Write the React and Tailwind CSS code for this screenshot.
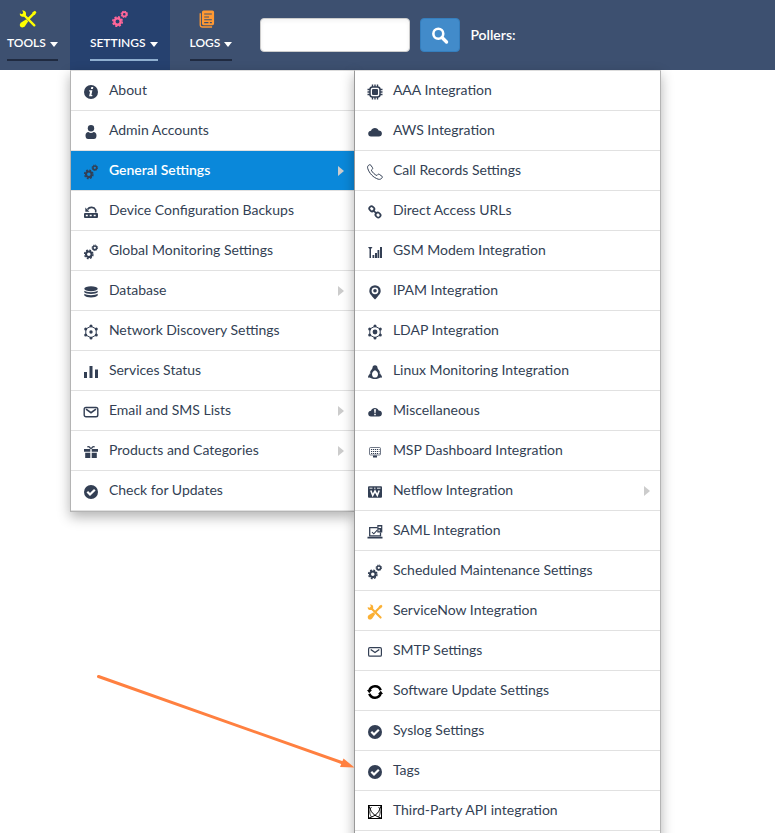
import clsx from 'clsx';

/** Base wrapper for the 16-grid menu icons */
function Icon({ className = 'size-4', children, ...rest }) {
  return (
    <svg viewBox="0 0 16 16" fill="currentColor" className={clsx('shrink-0', className)} aria-hidden="true" {...rest}>
      {children}
    </svg>
  );
}

function GearsIcon({ className }) {
  return (
    <Icon className={className}>
      <g fill="none" stroke="currentColor">
        <circle cx="5.8" cy="10.3" r="2.8" strokeWidth="2.1" />
        <circle cx="5.8" cy="10.3" r="4.2" strokeWidth="1.4" strokeDasharray="1.85 1.448" />
        <circle cx="11.8" cy="3.8" r="1.9" strokeWidth="1.5" />
        <circle cx="11.8" cy="3.8" r="2.8" strokeWidth="0.9" strokeDasharray="1.3 0.9" />
      </g>
    </Icon>
  );
}

function ToolsIcon({ className }) {
  return (
    <Icon className={className}>
      <path d="M4.2 4.2 13.6 13.6" stroke="currentColor" strokeWidth="2.100" strokeLinecap="round" />
      <path d="M.8 2.900 2.300 3.700 3.700 2.900 3.600 1.500 2.700.6C4.500.2 6 1.200 6.200 2.700L6.200 4.600 4.800 6.100 2.900 6.100C1.300 5.700.4 4.400.8 2.900Z" />
      <path d="M14.200.7 15.500 2 14.200 4.300 13.200 4.600 8.700 9.100 7.200 7.600 11.700 3.100 12 2.100Z" />
      <path d="M6.500 8.200 8.200 9.900 5.400 14.200C4.300 15.700 2.500 15.800 1.300 14.900.3 13.700.6 12 1.900 11.100Z" />
    </Icon>
  );
}

function LogsIcon({ className }) {
  return (
    <Icon className={className}>
      <path
        fillRule="evenodd"
        d="M5 .5h7.800a1.500 1.500 0 0 1 1.500 1.500v10a1.500 1.500 0 0 1-1.500 1.500H5A1.500 1.500 0 0 1 3.500 12V2A1.500 1.500 0 0 1 5 .5ZM5.500 3v1h6.800V3H5.500Zm0 2.700v1h4.300v-1H5.500Zm0 2.500v1h6.800v-1H5.500Zm0 2.500v1h3.800v-1H5.500Zm5 0v1h1.800v-1h-1.800Z"
      />
      <path d="M2 2.800v10.300a2 2 0 0 0 2 2h8.500" fill="none" stroke="currentColor" strokeWidth="1.200" />
    </Icon>
  );
}

function InfoIcon() {
  return (
    <Icon>
      <circle cx="8" cy="8" r="7" />
      <path d="M8.300 3h2l-.4 2h-2ZM6.200 6.200h3.200l-1 4.800h1l-.2 1.200H6.100l1-4.800H6Z" fill="#fff" />
    </Icon>
  );
}

function UserIcon() {
  return (
    <Icon>
      <circle cx="8" cy="4.200" r="3.200" />
      <path d="M2.500 11.400c0-2 1.300-3.300 2.900-3.400a4 4 0 0 0 5.200 0c1.600.1 2.900 1.400 2.900 3.400 0 2.200-1 3.600-2.600 3.600H5.100c-1.600 0-2.600-1.400-2.600-3.600Z" />
    </Icon>
  );
}

function BackupIcon() {
  return (
    <Icon>
      <path fillRule="evenodd" d="M2 9h12a1 1 0 0 1 1 1v3a1 1 0 0 1-1 1H2a1 1 0 0 1-1-1v-3a1 1 0 0 1 1-1Zm.8 1.700v1.600h2V10.700h-2Zm3.900 0v1.600h2V10.700h-2Zm4 0v1.600h2V10.700h-2Z" />
      <path d="M4.500 5.500C6.500 2.500 11 2.700 12.700 6v2.500" fill="none" stroke="currentColor" strokeWidth="1.600" />
      <path d="M2.300 7.700V3.600l4.200 4.100Z" />
    </Icon>
  );
}

function DatabaseIcon() {
  return (
    <Icon>
      <ellipse cx="8" cy="4.700" rx="6.700" ry="2.500" />
      <path d="M1.300 6.700c2 1.900 11.400 1.900 13.400 0v1.500c-2 2.300-11.400 2.300-13.400 0ZM1.300 9.700c2 1.900 11.400 1.900 13.400 0v1.800c-2 2.500-11.400 2.500-13.400 0Z" />
    </Icon>
  );
}

function NetworkIcon({ core = 1.700 }) {
  return (
    <Icon>
      <path d="M8 2.200 13.200 5v6L8 13.800 2.800 11V5Z" fill="none" stroke="currentColor" strokeWidth="1" />
      <circle cx="8" cy="8" r={core} />
      {[[8, 2], [13.300, 5], [13.300, 11], [8, 14], [2.700, 11], [2.700, 5]].map(([x, y]) => (
        <circle key={`${x}-${y}`} cx={x} cy={y} r="1.500" />
      ))}
    </Icon>
  );
}

const LdapIcon = () => <NetworkIcon core={2.400} />;

function BarsIcon() {
  return (
    <Icon>
      <path d="M1 8h3v6H1ZM6.500 2h3v12h-3ZM12 5.500h3V14h-3Z" />
    </Icon>
  );
}

function MailIcon() {
  return (
    <Icon fill="none" stroke="currentColor">
      <rect x="1.200" y="3.500" width="13.600" height="9.300" rx="1.800" strokeWidth="1.400" />
      <path d="M3 5.200 8 8.700l5-3.500" strokeWidth="1.600" />
    </Icon>
  );
}

function GiftIcon() {
  return (
    <Icon>
      <path d="M1 5h6.300v2.800H1ZM8.700 5H15v2.800H8.700ZM2.200 8.800h5.100V14H2.200ZM8.700 8.800h5.100V14H8.700Z" />
      <path d="M4.300 3c1.300-.7 2.500-.1 3.300 1.700M11.700 3c-1.300-.7-2.500-.1-3.300 1.700" fill="none" stroke="currentColor" strokeWidth="1.300" />
    </Icon>
  );
}

function CheckIcon() {
  return (
    <Icon>
      <circle cx="8" cy="8" r="7" />
      <path d="m4.300 7.800 2.700 2.700 4.800-4.800" fill="none" stroke="#fff" strokeWidth="2.200" />
    </Icon>
  );
}

function ChipIcon() {
  return (
    <Icon>
      <path d="M5.500 .5v15M8 .5v15M10.500 .5v15M.5 5.500h15M.5 8h15M.5 10.500h15" stroke="currentColor" strokeWidth="1.400" />
      <rect x="3" y="3" width="10" height="10" rx="2.500" fill="#fff" stroke="currentColor" strokeWidth="1.500" />
      <rect x="5" y="5" width="6" height="6" rx="1" />
    </Icon>
  );
}

function CloudIcon({ children }) {
  return (
    <Icon>
      <path d="M4 12.500a3 3 0 0 1-2.800-3c0-1.700 1.300-2.700 2.800-2.800C4.600 4.800 6.200 4 7.900 4c1.900 0 3.200 1 3.700 2.600 2 0 3.300 1.200 3.300 3s-1.200 2.900-3 2.900Z" />
      {children}
    </Icon>
  );
}

function CloudAlertIcon() {
  return (
    <CloudIcon>
      <path d="M7 5.300h2L8.500 9h-1ZM7.200 9.800h1.600v1.500H7.200Z" fill="#fff" />
    </CloudIcon>
  );
}

function PhoneIcon() {
  return (
    <Icon fill="none" stroke="currentColor">
      <path d="M2.300.8C.9 1.500.2 2.800.7 4.300c1.500 5 5.500 9.200 10.500 10.900 1.700.5 3.200-.2 4-1.600.3-.6.200-1-.3-1.400l-2.500-1.800c-.6-.4-1.100-.4-1.600.1l-.9 1C7.700 10.700 5.500 8.500 4.300 6.200l1-.9c.5-.5.5-1 .2-1.600L3.800 1.200C3.400.7 2.900.5 2.300.8Z" />
    </Icon>
  );
}

function LinkIcon() {
  return (
    <Icon fill="none" stroke="currentColor">
      <rect x="2.200" y="2.600" width="5.200" height="4.400" rx="2" strokeWidth="1.700" transform="rotate(45 4.800 4.800)" />
      <rect x="8.400" y="8.800" width="5.200" height="4.400" rx="2" strokeWidth="1.700" transform="rotate(45 11 11)" />
      <path d="m5.800 5.800 4.200 4.200" strokeWidth="1.700" />
    </Icon>
  );
}

function SignalIcon() {
  return (
    <Icon>
      <path d="M1 3h4.500L4 5V14H2.500V5ZM5.500 11h1.800v3H5.500ZM8 9h2v5H8ZM10.500 6h1.800v8h-1.800ZM13 3h2v11h-2Z" />
    </Icon>
  );
}

function PinIcon() {
  return (
    <Icon>
      <path fillRule="evenodd" d="M8 1.200a5.700 5.700 0 0 1 5.700 5.700c0 3-2.700 4.700-4.200 7.200L8 15.500l-1.500-1.400C5 11.600 2.300 9.900 2.300 6.900A5.700 5.700 0 0 1 8 1.200ZM8 3.400a3.400 3.400 0 1 0 0 6.800 3.400 3.400 0 0 0 0-6.800Z" />
      <circle cx="8" cy="6.800" r="1.800" />
    </Icon>
  );
}

function PenguinIcon() {
  return (
    <Icon>
      <path d="M8 1.200c1.700 0 2.500 1.100 2.500 2.600 0 1.200 2 2.200 2.700 5.200l1.700 3.400c.3.900-.5 1.400-1.300 1.200l-2.500.8c-1.800.8-4.400.8-6.200 0l-2.500-.8c-.8.2-1.600-.3-1.300-1.200L2.800 9c.7-3 2.700-4 2.700-5.200 0-1.500.8-2.600 2.500-2.600Z" />
      <path d="M8 6.200c2 .7 3 2.300 3 4 0 2-1.200 3.400-3 3.400s-3-1.400-3-3.400c0-1.700 1-3.300 3-4Z" fill="#fff" />
      <path d="M1.500 10.500 3.600 9M14.500 10.500 12.400 9" stroke="#fff" strokeWidth=".8" />
    </Icon>
  );
}

function MonitorIcon() {
  return (
    <Icon>
      <rect x="2.500" y="3.500" width="11" height="7.500" rx="1" fill="none" stroke="currentColor" strokeWidth=".7" />
      <path d="M4 5.500h8.500M4 7.500h8.500M4 9.500h8.500" stroke="currentColor" strokeWidth="1.200" strokeDasharray="1.200 .8" />
      <path d="M6 11.500h4v2H6Z" />
    </Icon>
  );
}

function NetflowIcon() {
  return (
    <Icon>
      <rect x="1" y="2.300" width="14" height="11.500" rx="1" />
      <path d="M2.500 4.200h3M7 4.200h1.500M10 4.200h3.500" stroke="#fff" strokeWidth=".9" />
      <path d="m3.800 6.500 1.900 4.800L8 7l2.300 4.300 1.900-4.800" fill="none" stroke="#fff" strokeWidth="1.600" />
    </Icon>
  );
}

function LaptopIcon() {
  return (
    <Icon>
      <path d="M10.500 3.600H2.700v8.200h10.800V8.500" fill="none" stroke="currentColor" strokeWidth="1.300" />
      <path d="M.5 12.800h15v1.700H.5ZM10.300 1h5v7.500h-5Z" />
      <path d="M11.500 2.500h2.600v1.500h-2.600ZM11.500 5.600h1.200v1.600h-1.200Z" fill="#fff" />
      <path d="m5 8.200 1.800 1.600 3.400-3.600" fill="none" stroke="currentColor" strokeWidth="1.100" />
    </Icon>
  );
}

function SmallMailIcon() {
  return (
    <Icon fill="none" stroke="currentColor">
      <rect x="1.600" y="3.700" width="12.800" height="8.500" rx="1.300" strokeWidth="1.200" />
      <path d="m3.700 5.500 4.300 3 4.300-3" strokeWidth="1.400" />
    </Icon>
  );
}

function RefreshIcon() {
  return (
    <Icon className="size-4 text-black">
      <path d="M2.300 6.600A6 6 0 0 1 13.700 6.200M13.700 9.400A6 6 0 0 1 2.300 9.800" fill="none" stroke="currentColor" strokeWidth="2.500" />
      <path d="M0 6h5L2.200 9.300ZM16 10h-5l2.800-3.300Z" />
    </Icon>
  );
}

function ApiIcon() {
  return (
    <Icon className="size-4 text-black" fill="none" stroke="currentColor">
      <rect x="1.500" y="1.500" width="13" height="13" strokeWidth="1" />
      <path d="M2 2c1.300 4.500 3.300 7.500 6 9.300 2 1.300 4 2 6 2.700M14 2c-1.300 4.500-3.300 7.500-6 9.300-2 1.300-4 2-6 2.700" strokeWidth="1" />
      <path d="M4.500 3C2.200 5.500 2.200 10 4.500 13M11.500 3c2.300 2.500 2.300 7 0 10" strokeWidth=".8" />
    </Icon>
  );
}

const ServiceNowIcon = () => <ToolsIcon className="size-4 text-[#fbb034]" />;

const settingsMenu = [
  { label: 'About', icon: InfoIcon },
  { label: 'Admin Accounts', icon: UserIcon },
  { label: 'General Settings', icon: GearsIcon, hasChildren: true, active: true },
  { label: 'Device Configuration Backups', icon: BackupIcon },
  { label: 'Global Monitoring Settings', icon: GearsIcon },
  { label: 'Database', icon: DatabaseIcon, hasChildren: true },
  { label: 'Network Discovery Settings', icon: NetworkIcon },
  { label: 'Services Status', icon: BarsIcon },
  { label: 'Email and SMS Lists', icon: MailIcon, hasChildren: true },
  { label: 'Products and Categories', icon: GiftIcon, hasChildren: true },
  { label: 'Check for Updates', icon: CheckIcon },
];

const generalMenu = [
  { label: 'AAA Integration', icon: ChipIcon },
  { label: 'AWS Integration', icon: CloudIcon },
  { label: 'Call Records Settings', icon: PhoneIcon },
  { label: 'Direct Access URLs', icon: LinkIcon },
  { label: 'GSM Modem Integration', icon: SignalIcon },
  { label: 'IPAM Integration', icon: PinIcon },
  { label: 'LDAP Integration', icon: LdapIcon },
  { label: 'Linux Monitoring Integration', icon: PenguinIcon },
  { label: 'Miscellaneous', icon: CloudAlertIcon },
  { label: 'MSP Dashboard Integration', icon: MonitorIcon },
  { label: 'Netflow Integration', icon: NetflowIcon, hasChildren: true },
  { label: 'SAML Integration', icon: LaptopIcon },
  { label: 'Scheduled Maintenance Settings', icon: GearsIcon },
  { label: 'ServiceNow Integration', icon: ServiceNowIcon },
  { label: 'SMTP Settings', icon: SmallMailIcon },
  { label: 'Software Update Settings', icon: RefreshIcon },
  { label: 'Syslog Settings', icon: CheckIcon },
  { label: 'Tags', icon: CheckIcon },
  { label: 'Third-Party API integration', icon: ApiIcon },
];

function MenuItem({ item }) {
  const ItemIcon = item.icon;
  return (
    <li>
      <a
        href="#"
        className={clsx(
          'flex h-10 items-center gap-2.5 border-b border-[#e1e1e1] pl-3 pr-2 text-sm whitespace-nowrap',
          item.active ? 'bg-[#0a88da] font-semibold text-white' : 'text-[#333f54]'
        )}
      >
        <span className="mt-0.5 text-[#333f54]">
          <ItemIcon />
        </span>
        <span className="flex-1 pb-0.5">{item.label}</span>
        {item.hasChildren && (
          <svg viewBox="0 0 6 10" className="mr-0.5 h-2.5 w-1.5 fill-[#ccc]" aria-hidden="true">
            <path d="M0 0 6 5 0 10Z" />
          </svg>
        )}
      </a>
    </li>
  );
}

function Menu({ items, className }) {
  return (
    <ul className={clsx('border border-[#b4b4b4] border-t-[#ddd] bg-white shadow-[0_5px_12px_rgba(0,0,0,0.3)]', className)}>
      {items.map((item) => (
        <MenuItem key={item.label} item={item} />
      ))}
    </ul>
  );
}

function NavItem({ label, icon, active, className, children }) {
  return (
    <li className={clsx('relative h-full pr-3', active && 'bg-[#26416f]', className)}>
      <button type="button" className="flex h-full flex-col items-center pt-2.5">
        <span className="mr-2">{icon}</span>
        <span
          className={clsx(
            'mt-1 flex h-[29px] items-start gap-1 border-b-2 pt-[3px] text-xs font-semibold text-white',
            active ? 'border-[#8fafd0]' : 'border-[#1f2a40]'
          )}
        >
          {label}
          <svg viewBox="0 0 8 5" className="mt-[7px] h-[5px] w-2 fill-white" aria-hidden="true">
            <path d="M0 0H8L4 5Z" />
          </svg>
        </span>
      </button>
      {children}
    </li>
  );
}

export default function App() {
  return (
    <div className="relative h-screen overflow-hidden bg-white font-[Lato,sans-serif]">
      <header className="flex h-[70px] items-center bg-[#3d5070]">
        <ul className="flex h-full">
          <NavItem label="TOOLS" className="pl-[7px]" icon={<ToolsIcon className="size-[18px] text-[#ffff00]" />} />
          <NavItem label="SETTINGS" className="pl-5" active icon={<GearsIcon className="size-[18px] text-[#ff6699]" />}>
            <div className="absolute top-full left-0 z-10 flex items-start">
              <Menu items={settingsMenu} className="w-[284px] border-r-0" />
              <Menu items={generalMenu} className="relative w-[307px] border-l-[#999] pb-10" />
            </div>
          </NavItem>
          <NavItem label="LOGS" className="pl-5" icon={<LogsIcon className="size-[18px] text-[#ff9933]" />} />
        </ul>
        <form className="ml-4 flex items-center gap-2.5" onSubmit={(e) => e.preventDefault()}>
          <input
            type="text"
            aria-label="Search"
            className="h-[34px] w-[150px] rounded border border-[#ccc] bg-white px-3 text-sm shadow-inner"
          />
          <button
            type="submit"
            aria-label="Search"
            className="flex h-[34px] w-10 items-center justify-center rounded border border-[#357ebd] bg-[#428bca] text-white"
          >
            <Icon className="mt-0.5 size-[18px]" fill="none" stroke="currentColor">
              <circle cx="6.500" cy="6" r="4.400" strokeWidth="2.300" />
              <path d="m9.800 9.300 4 4" strokeWidth="3" strokeLinecap="round" />
            </Icon>
          </button>
          <span className="text-sm font-semibold text-white">Pollers:</span>
        </form>
      </header>

      {/* Callout arrow pointing at the Tags entry */}
      <svg viewBox="0 0 260 96" className="absolute top-[674px] left-24 z-20 h-24 w-[260px]" aria-hidden="true">
        <path d="M2.500 2.500 247 89" stroke="#ff8040" strokeWidth="3" strokeLinecap="round" />
        <path d="M247.500 84.500 258.500 93.500 244 93Z" fill="#ff8040" />
      </svg>
    </div>
  );
}
